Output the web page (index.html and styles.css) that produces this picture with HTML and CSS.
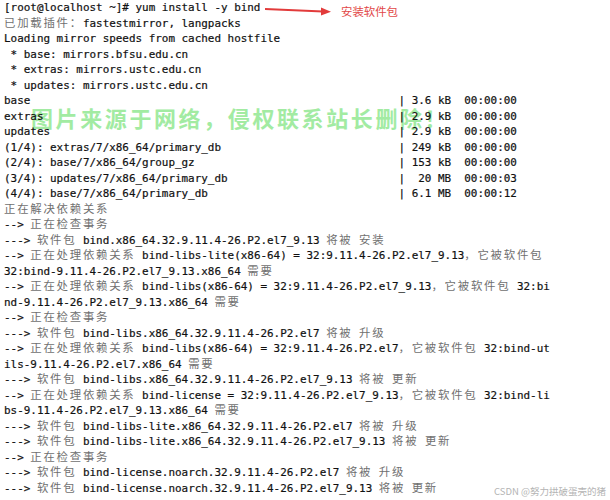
FILE: index.html
```html
<!DOCTYPE html>
<html lang="zh-CN">
<head>
<meta charset="utf-8">
<title>yum install bind</title>
<link rel="stylesheet" href="styles.css">
</head>
<body>
<div class="shot">
<div class="watermark">图片来源于网络，侵权联系站长删除！</div>
<div class="term">
<div class="ln">[root@localhost ~]# yum install -y bind</div>
<div class="ln"><span class="z">已加载插件：</span>fastestmirror, langpacks</div>
<div class="ln">Loading mirror speeds from cached hostfile</div>
<div class="ln"> * base: mirrors.bfsu.edu.cn</div>
<div class="ln"> * extras: mirrors.ustc.edu.cn</div>
<div class="ln"> * updates: mirrors.ustc.edu.cn</div>
<div class="ln"><span class="c">base</span>| 3.6 kB  00:00:00</div>
<div class="ln"><span class="c">extras</span>| 2.9 kB  00:00:00</div>
<div class="ln"><span class="c">updates</span>| 2.9 kB  00:00:00</div>
<div class="ln"><span class="c">(1/4): extras/7/x86_64/primary_db</span>| 249 kB  00:00:00</div>
<div class="ln"><span class="c">(2/4): base/7/x86_64/group_gz</span>| 153 kB  00:00:00</div>
<div class="ln"><span class="c">(3/4): updates/7/x86_64/primary_db</span>|  20 MB  00:00:03</div>
<div class="ln"><span class="c">(4/4): base/7/x86_64/primary_db</span>| 6.1 MB  00:00:12</div>
<div class="ln"><span class="z">正在解决依赖关系</span></div>
<div class="ln">--&gt; <span class="z">正在检查事务</span></div>
<div class="ln">---&gt; <span class="z">软件包</span> bind.x86_64.32.9.11.4-26.P2.el7_9.13 <span class="z">将被</span> <span class="z">安装</span></div>
<div class="ln">--&gt; <span class="z">正在处理依赖关系</span> bind-libs-lite(x86-64) = 32:9.11.4-26.P2.el7_9.13<span class="z">，它被软件包</span></div>
<div class="ln">32:bind-9.11.4-26.P2.el7_9.13.x86_64 <span class="z">需要</span></div>
<div class="ln">--&gt; <span class="z">正在处理依赖关系</span> bind-libs(x86-64) = 32:9.11.4-26.P2.el7_9.13<span class="z">，它被软件包</span> 32:bi</div>
<div class="ln">nd-9.11.4-26.P2.el7_9.13.x86_64 <span class="z">需要</span></div>
<div class="ln">--&gt; <span class="z">正在检查事务</span></div>
<div class="ln">---&gt; <span class="z">软件包</span> bind-libs.x86_64.32.9.11.4-26.P2.el7 <span class="z">将被</span> <span class="z">升级</span></div>
<div class="ln">--&gt; <span class="z">正在处理依赖关系</span> bind-libs(x86-64) = 32:9.11.4-26.P2.el7<span class="z">，它被软件包</span> 32:bind-ut</div>
<div class="ln">ils-9.11.4-26.P2.el7.x86_64 <span class="z">需要</span></div>
<div class="ln">---&gt; <span class="z">软件包</span> bind-libs.x86_64.32.9.11.4-26.P2.el7_9.13 <span class="z">将被</span> <span class="z">更新</span></div>
<div class="ln">--&gt; <span class="z">正在处理依赖关系</span> bind-license = 32:9.11.4-26.P2.el7_9.13<span class="z">，它被软件包</span> 32:bind-li</div>
<div class="ln">bs-9.11.4-26.P2.el7_9.13.x86_64 <span class="z">需要</span></div>
<div class="ln">---&gt; <span class="z">软件包</span> bind-libs-lite.x86_64.32.9.11.4-26.P2.el7 <span class="z">将被</span> <span class="z">升级</span></div>
<div class="ln">---&gt; <span class="z">软件包</span> bind-libs-lite.x86_64.32.9.11.4-26.P2.el7_9.13 <span class="z">将被</span> <span class="z">更新</span></div>
<div class="ln">--&gt; <span class="z">正在检查事务</span></div>
<div class="ln">---&gt; <span class="z">软件包</span> bind-license.noarch.32.9.11.4-26.P2.el7 <span class="z">将被</span> <span class="z">升级</span></div>
<div class="ln">---&gt; <span class="z">软件包</span> bind-license.noarch.32.9.11.4-26.P2.el7_9.13 <span class="z">将被</span> <span class="z">更新</span></div>
</div>

<div class="note">
<svg class="arrow" width="70" height="12" viewBox="0 0 70 12" aria-hidden="true">
<line x1="0" y1="4" x2="58" y2="6.5" stroke="#e23b3b" stroke-width="2"/>
<polygon points="56,2.5 66,6.8 56,10.5" fill="#e23b3b"/>
</svg>
<span class="note-text">安装软件包</span>
</div>

<div class="csdn">CSDN @努力拱破蛋壳的猪</div>
</div>
</body>
</html>
```

FILE: styles.css
```css
html, body {
  margin: 0;
  padding: 0;
  background: #ffffff;
}

.shot {
  position: relative;
  width: 610px;
  height: 500px;
  overflow: hidden;
  background: #ffffff;
}

.term {
  position: relative;
  display: flex;
  flex-direction: column;
  padding: 0 0 0 4px;
  font-family: "DejaVu Sans Mono", "Liberation Mono", monospace;
  font-size: 10.93px;
  line-height: 15.5px;
  color: #111111;
  -webkit-text-stroke: 0.2px #111111;
}

.ln {
  height: 15.5px;
  white-space: pre;
}

.ln .c {
  display: inline-block;
  width: 60ch;
}

.ln .z {
  font-family: "Noto Sans CJK SC", sans-serif;
  font-size: 11.4px;
  letter-spacing: 1.76px;
  line-height: 1;
  color: #707070;
  -webkit-text-stroke: 0;
}

.note {
  position: absolute;
  left: 265px;
  top: 4px;
  display: flex;
  align-items: center;
  gap: 6px;
}

.arrow {
  display: block;
}

.note-text {
  font-family: "Noto Sans CJK SC", sans-serif;
  font-size: 11.4px;
  line-height: 14px;
  color: #e24848;
}

.watermark {
  position: absolute;
  left: 31px;
  top: 104px;
  font-family: "Noto Sans CJK SC", sans-serif;
  font-weight: 700;
  font-size: 22px;
  line-height: 26px;
  letter-spacing: 2.6px;
  color: #a2eba2;
  white-space: nowrap;
  pointer-events: none;
}

.csdn {
  position: absolute;
  right: 4px;
  top: 484px;
  font-family: "Noto Sans CJK SC", sans-serif;
  font-size: 9.5px;
  line-height: 14px;
  color: #b4b4b4;
  white-space: nowrap;
}
```
